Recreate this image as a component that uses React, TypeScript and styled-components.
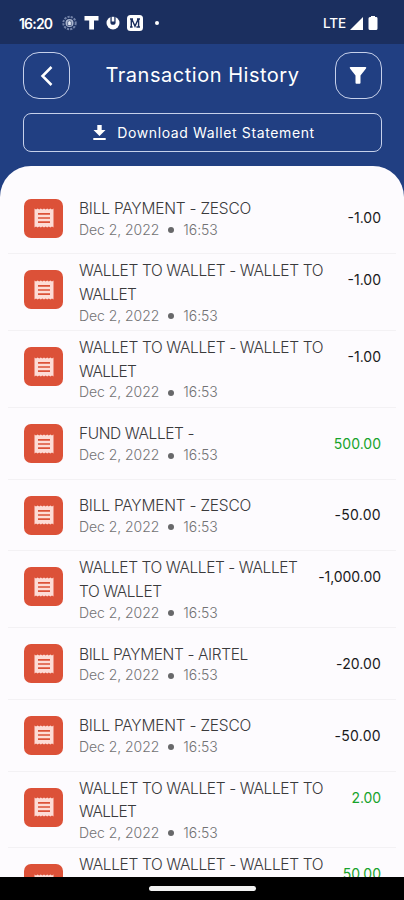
import React from "react";
import styled, { createGlobalStyle } from "styled-components";

const GlobalStyle = createGlobalStyle`
  * { box-sizing: border-box; }
  body { margin: 0; background: #213f82; font-family: Inter, "Noto Sans", sans-serif; }
`;

const Screen = styled.div`
  width: 100%;
  height: 900px;
  display: flex;
  flex-direction: column;
  overflow: hidden;
  background: #213f82;
`;

const StatusBar = styled.div`
  flex: 0 0 44px;
  display: flex;
  align-items: center;
  padding: 2px 26px 0 19px;
  background: #1b2f5f;
  color: #fff;
`;

const Clock = styled.span`
  width: 43px;
  font-size: 14px;
  font-weight: 600;
  letter-spacing: -0.8px;
`;

const StatusIcons = styled.div`
  display: flex;
  align-items: center;
  gap: 7px;
`;

const Signal = styled.div`
  margin-left: auto;
  display: flex;
  align-items: center;
  gap: 5px;
`;

const Network = styled.span`
  font-size: 13.5px;
  font-weight: 500;
  letter-spacing: -0.1px;
  margin-right: -1px;
`;

const Header = styled.header`
  flex: 0 0 69px;
  display: flex;
  justify-content: space-between;
  padding: 8px 22px 0 23px;
`;

const IconButton = styled.button`
  width: 47px;
  height: 47px;
  padding: 0;
  display: flex;
  align-items: center;
  justify-content: center;
  background: transparent;
  border: 1px solid #c6d0ea;
  border-radius: 16px;
`;

const Title = styled.h1`
  margin: 0;
  font-size: 20px;
  line-height: 47px;
  font-weight: 400;
  letter-spacing: 0.52px;
  color: #fff;
  white-space: nowrap;
`;

const DownloadButton = styled.button`
  flex: 0 0 39px;
  margin: 0 22px 14px 23px;
  padding: 0 0 0 3px;
  display: flex;
  align-items: center;
  justify-content: center;
  gap: 11px;
  background: transparent;
  border: 1px solid #c6d0ea;
  border-radius: 8px;
  color: #fff;
  font-family: inherit;
  font-size: 14px;
  font-weight: 400;
  letter-spacing: 0.62px;
`;

const Sheet = styled.main`
  flex: 1 1 0;
  min-height: 0;
  overflow: hidden;
  padding: 16.8px 8px 0;
  background: #fdfbfe;
  border-radius: 31px 31px 0 0;
`;

const Row = styled.div<{ $tall: boolean }>`
  height: ${(p) => (p.$tall ? 76.8 : 71.7)}px;
  display: flex;
  align-items: flex-start;
  padding: 0 15px 0 16px;
  border-bottom: 1px solid #f3f1f4;
`;

const Tile = styled.div`
  flex: 0 0 39px;
  height: 39px;
  margin: 16px 16px 0 0;
  display: flex;
  align-items: center;
  justify-content: center;
  background: #dc5138;
  border-radius: 7px;
`;

const Details = styled.div<{ $tall: boolean }>`
  flex: 1 1 0;
  min-width: 0;
  padding-top: ${(p) => (p.$tall ? 5 : 14.4)}px;
`;

const Line = styled.div<{ $track: number }>`
  font-size: 15.5px;
  line-height: 23.6px;
  font-weight: 300;
  letter-spacing: ${(p) => p.$track}px;
  color: #3a3a3c;
  white-space: nowrap;
`;

const Meta = styled.div`
  display: flex;
  align-items: center;
  font-size: 14px;
  line-height: 18px;
  font-weight: 300;
  letter-spacing: -0.05px;
  color: #727274;
`;

const Dot = styled.span`
  width: 6px;
  height: 6px;
  margin: 1px 9px 0 9px;
  border-radius: 50%;
  background: #68686a;
`;

const Amount = styled.div<{ $tall: boolean; $credit: boolean; $track: number }>`
  margin-top: ${(p) => (p.$tall ? 16 : 25.6)}px;
  font-size: 14px;
  line-height: 20px;
  font-weight: 430;
  letter-spacing: ${(p) => p.$track}px;
  color: ${(p) => (p.$credit ? "#17a32b" : "#19191b")};
  white-space: nowrap;
`;

const NavBar = styled.div`
  flex: 0 0 23px;
  display: flex;
  justify-content: center;
  padding-top: 9px;
  background: #000;
`;

const NavPill = styled.div`
  width: 107px;
  height: 5px;
  border-radius: 3px;
  background: #f2f2f2;
`;

const ReceiptIcon = () => (
  <svg width="20" height="20" viewBox="0 0 20 20">
    <path
      d="M.5 .4 2 1.5 3.6.4 5.2 1.5 6.8.4 8.4 1.5 10 .4l1.6 1.1L13.2.4l1.6 1.1L16.4.4 18 1.5 19.5.4v19.2L18 18.5l-1.6 1.1-1.6-1.1-1.6 1.1-1.6-1.1-1.6 1.1-1.6-1.1-1.6 1.1-1.6-1.1-1.6 1.1L2 18.5.5 19.6z"
      fill="#fddcd6"
    />
    <path d="M4 5.8h12M4 10h12M4 14.2h12" stroke="#dc5138" strokeWidth="1.7" />
  </svg>
);

const CrestIcon = () => (
  <svg width="15" height="16" viewBox="0 0 15 16">
    <circle cx="7.5" cy="8" r="6.2" fill="none" stroke="#7383a8" strokeWidth="2" strokeDasharray="2.2 1.1" />
    <circle cx="7.5" cy="8" r="4" fill="#a9b5cd" />
    <path d="M5.7 10.500V7.500a1.800 1.800 0 0 1 3.600 0v3z" fill="#e3e8f2" stroke="#40527d" strokeWidth=".8" />
  </svg>
);

const BlockTIcon = () => (
  <svg width="15" height="16" viewBox="0 0 15 16">
    <path d="M.5 1h14v4.600H10v8.900H5.200V5.600H.5z" fill="#fff" />
  </svg>
);

const RingIcon = () => (
  <svg width="14" height="16" viewBox="0 0 14 16">
    <circle cx="7" cy="8" r="6.500" fill="#fff" />
    <path d="M4.400 1v6.200a2.600 2.600 0 0 0 5.200 0V1z" fill="#1b2f5f" />
    <path d="M5.700 1.800h2.600v4.700H5.700z" fill="#fff" />
  </svg>
);

const MediumIcon = () => (
  <svg width="16" height="16" viewBox="0 0 16 16">
    <rect width="16" height="16" rx="3.5" fill="#fff" />
    <path d="M3 4h3M10 4h3M3 12h2.600M9.400 12H13M4.300 4v8M11.600 4v8M4.800 4 8 11.200 11.200 4" fill="none" stroke="#1b2f5f" strokeWidth="1.4" />
  </svg>
);

const MoreDot = styled.span`
  width: 4px;
  height: 4px;
  margin-left: 5px;
  border-radius: 50%;
  background: #fff;
`;

type Entry = { lines: [string, number][]; amount: string; track: number };

const zesco: [string, number][] = [["BILL PAYMENT - ZESCO", -0.22]];
const wallet: [string, number][] = [
  ["WALLET TO WALLET - WALLET TO", -0.37],
  ["WALLET", -0.65],
];

const entries: Entry[] = [
  { lines: zesco, amount: "-1.00", track: 0 },
  { lines: wallet, amount: "-1.00", track: 0 },
  { lines: wallet, amount: "-1.00", track: 0 },
  { lines: [["FUND WALLET -", -0.4]], amount: "500.00", track: 0 },
  { lines: zesco, amount: "-50.00", track: 0.3 },
  { lines: [["WALLET TO WALLET - WALLET", -0.42], ["TO WALLET", -0.45]], amount: "-1,000.00", track: -0.05 },
  { lines: [["BILL PAYMENT - AIRTEL", -0.38]], amount: "-20.00", track: 0.1 },
  { lines: zesco, amount: "-50.00", track: 0.3 },
  { lines: wallet, amount: "2.00", track: -0.1 },
  { lines: wallet, amount: "50.00", track: 0 },
];

const Transaction = ({ lines, amount, track }: Entry) => {
  const tall = lines.length > 1;
  return (
    <Row $tall={tall}>
      <Tile><ReceiptIcon /></Tile>
      <Details $tall={tall}>
        {lines.map(([text, spacing]) => (
          <Line key={text} $track={spacing}>{text}</Line>
        ))}
        <Meta>Dec 2, 2022<Dot />16:53</Meta>
      </Details>
      <Amount $tall={tall} $credit={!amount.startsWith("-")} $track={track}>{amount}</Amount>
    </Row>
  );
};

export default function App() {
  return (
    <Screen>
      <GlobalStyle />
      <StatusBar>
        <Clock>16:20</Clock>
        <StatusIcons>
          <CrestIcon />
          <BlockTIcon />
          <RingIcon />
          <MediumIcon />
          <MoreDot />
        </StatusIcons>
        <Signal>
          <Network>LTE</Network>
          <svg width="13" height="13" viewBox="0 0 13 13"><path d="M13 0v13H0z" fill="#fff" /></svg>
          <svg width="10" height="14" viewBox="0 0 10 14"><path d="M3 0h4v1h1.500Q9.500 1 9.500 2.500v10q0 1.500-1.500 1.500H2Q.5 14 .5 12.500v-10Q.5 1 2 1h1z" fill="#fff" /></svg>
        </Signal>
      </StatusBar>
      <Header>
        <IconButton aria-label="Back">
          <svg width="14" height="20" viewBox="0 0 14 20"><path d="M11.500 1 2.500 10l9 9" fill="none" stroke="#fff" strokeWidth="2.500" /></svg>
        </IconButton>
        <Title>Transaction History</Title>
        <IconButton aria-label="Filter">
          <svg width="18" height="17" viewBox="0 0 18 17"><path d="M1.500 0h15q1.400.3.500 1.600L11.500 8.500v7.300q0 .9-.9.900H7.400q-.9 0-.9-.9V8.500L1 1.600Q.100.3 1.500 0z" fill="#fff" /></svg>
        </IconButton>
      </Header>
      <DownloadButton>
        <svg width="13" height="15" viewBox="0 0 13 15"><path d="M4.300 0h4.400v5H12.500l-6 6-6-6h3.800zM.3 13h12.400v2H.3z" fill="#fff" /></svg>
        Download Wallet Statement
      </DownloadButton>
      <Sheet>
        {entries.map((entry, i) => <Transaction key={i} {...entry} />)}
      </Sheet>
      <NavBar><NavPill /></NavBar>
    </Screen>
  );
}
